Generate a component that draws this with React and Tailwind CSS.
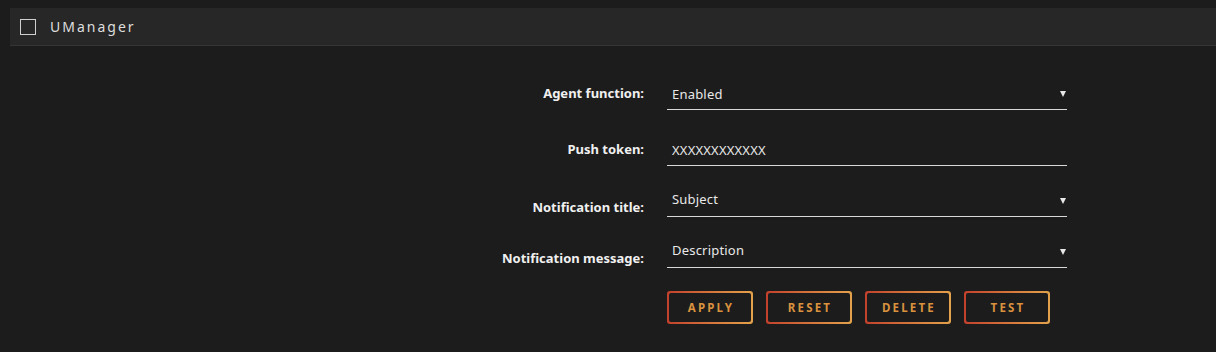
import React from "react";

function Field({ label, value, select, labelShift, mt }) {
  return (
    <div className={`flex ${mt}`}>
      <div
        className={`w-[634px] h-[32px] flex items-center justify-end text-[13px] font-bold text-[#f0f0f0] ${labelShift}`}
      >
        {label}
      </div>
      <div className="ml-[23px] w-[400px] h-[32px] border-b border-[#d8d8d8] flex items-center justify-between pl-[5px] pr-[1px] text-[13px] tracking-[0.2px] text-[#e8e8e8]">
        <span className={labelShift ? "-translate-y-[1px]" : "translate-y-[1px]"}>{value}</span>
        {select && (
          <svg width="6" height="7" viewBox="0 0 6 7" className={labelShift ? "translate-y-[1px]" : "translate-y-[1px]"}>
            <polygon points="0,0 6,0 3,6" fill="#e8e8e8" />
          </svg>
        )}
      </div>
    </div>
  );
}

function Btn({ children }) {
  return (
    <div className="w-[86px] h-[33px] rounded-[3px] p-[2px] bg-gradient-to-r from-[#c2402c] to-[#e3a24b]">
      <div className="w-full h-full rounded-[2px] bg-[#1c1c1c] flex items-center justify-center text-[11.5px] font-bold tracking-[2.2px] text-[#da923f] pl-[2px]">
        {children}
      </div>
    </div>
  );
}

export default function App() {
  return (
    <div
      className="w-[1216px] h-[352px] bg-[#1c1c1c] pt-[8px] pl-[10px] overflow-hidden"
      style={{ fontFamily: '"Noto Sans", "Open Sans", sans-serif' }}
    >
      <div className="h-[38px] bg-[#272727] border-b border-[#353535] flex items-center">
        <div className="ml-[10px] w-[16px] h-[16px] border-[1.5px] border-[#cfcfcf]" />
        <span className="ml-[14px] text-[14px] tracking-[2px] text-[#dedede]">UManager</span>
      </div>
      <Field label="Agent function:" value="Enabled" select mt="mt-[32px]" labelShift="" />
      <Field label="Push token:" value="XXXXXXXXXXXX" mt="mt-[24px]" labelShift="" />
      <Field label="Notification title:" value="Subject" select mt="mt-[19px]" labelShift="pt-[13px]" />
      <Field label="Notification message:" value="Description" select mt="mt-[19px]" labelShift="pt-[13px]" />
      <div className="flex gap-[13px] ml-[657px] mt-[23px]">
        <Btn>APPLY</Btn>
        <Btn>RESET</Btn>
        <Btn>DELETE</Btn>
        <Btn>TEST</Btn>
      </div>
    </div>
  );
}
